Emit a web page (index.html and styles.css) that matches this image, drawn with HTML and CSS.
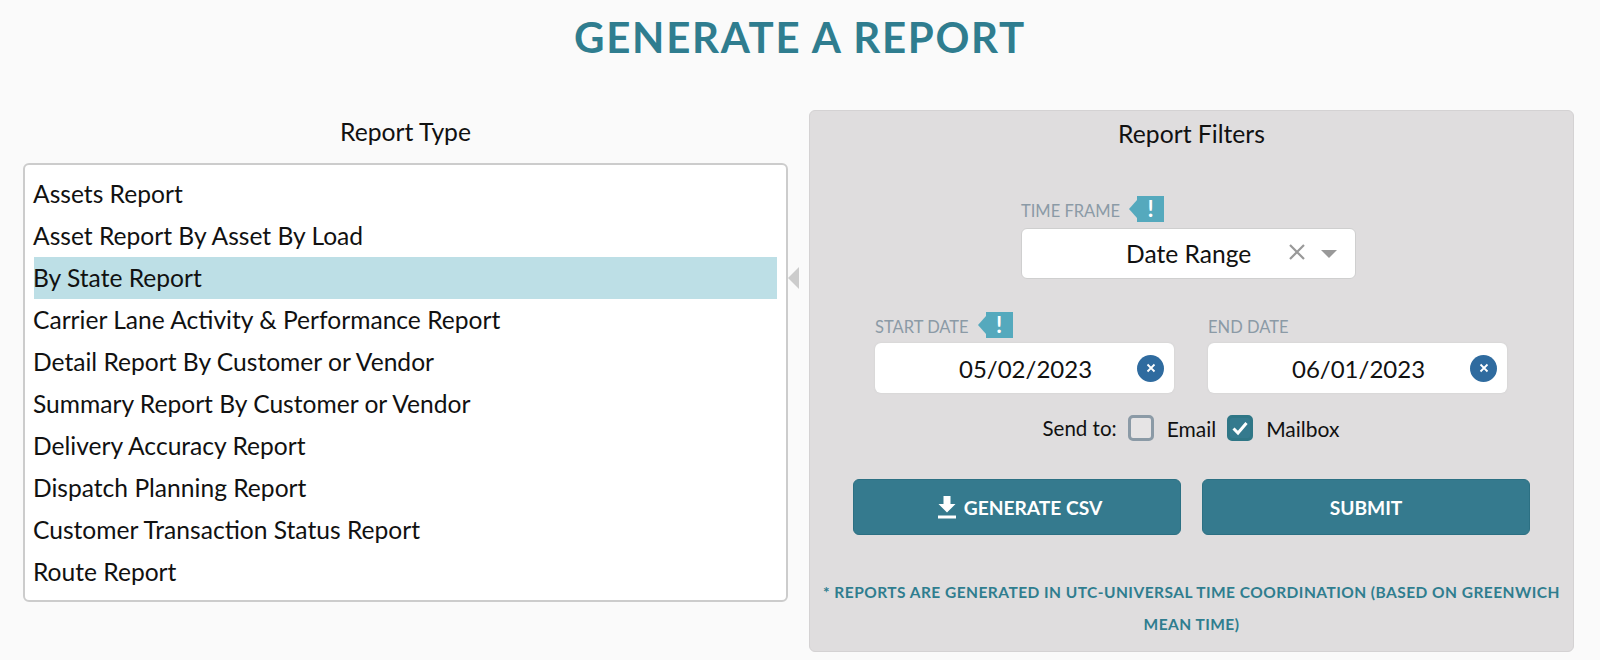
FILE: index.html
```html
<!DOCTYPE html>
<html lang="en">
<head>
    <meta charset="UTF-8">
    <title>Generate a Report</title>
    <link rel="stylesheet" href="styles.css">
</head>
<body>

    <h1 class="page-title">GENERATE A REPORT</h1>

    <div class="report-columns">

        <!-- Report Type -->
        <div class="type-column">
            <h2 class="column-heading">Report Type</h2>
            <div class="type-list">
                <div class="type-row">Assets Report</div>
                <div class="type-row">Asset Report By Asset By Load</div>
                <div class="type-row selected">By State Report</div>
                <div class="type-row">Carrier Lane Activity &amp; Performance Report</div>
                <div class="type-row">Detail Report By Customer or Vendor</div>
                <div class="type-row">Summary Report By Customer or Vendor</div>
                <div class="type-row">Delivery Accuracy Report</div>
                <div class="type-row">Dispatch Planning Report</div>
                <div class="type-row">Customer Transaction Status Report</div>
                <div class="type-row">Route Report</div>
                <span class="list-arrow"></span>
            </div>
        </div>

        <!-- Report Filters -->
        <div class="filter-panel">
            <h2 class="column-heading">Report Filters</h2>

            <div class="time-frame">
                <div class="field-label">
                    TIME FRAME
                    <span class="hint-tag">!</span>
                </div>
                <div class="select-box">
                    <span class="select-value">Date Range</span>
                    <svg class="select-clear" width="16" height="16" viewBox="0 0 16 16">
                        <path d="M1 1L15 15M15 1L1 15" stroke="#999" stroke-width="2.2" fill="none"/>
                    </svg>
                    <span class="select-caret"></span>
                </div>
            </div>

            <div class="date-row">
                <div class="date-field">
                    <div class="field-label">
                        START DATE
                        <span class="hint-tag">!</span>
                    </div>
                    <div class="date-box">
                        <span class="date-value">05/02/2023</span>
                        <span class="date-clear">
                            <svg width="12" height="12" viewBox="0 0 12 12">
                                <path d="M2.5 2.5L9.5 9.5M9.5 2.5L2.5 9.5" stroke="#fff" stroke-width="1.8" fill="none"/>
                            </svg>
                        </span>
                    </div>
                </div>
                <div class="date-field">
                    <div class="field-label">END DATE</div>
                    <div class="date-box">
                        <span class="date-value">06/01/2023</span>
                        <span class="date-clear">
                            <svg width="12" height="12" viewBox="0 0 12 12">
                                <path d="M2.5 2.5L9.5 9.5M9.5 2.5L2.5 9.5" stroke="#fff" stroke-width="1.8" fill="none"/>
                            </svg>
                        </span>
                    </div>
                </div>
            </div>

            <div class="send-row">
                <span class="send-label">Send to:</span>
                <span class="check-box"></span>
                <span class="check-label">Email</span>
                <span class="check-box checked">
                    <svg width="18" height="16" viewBox="0 0 18 16">
                        <path d="M2.5 8.5L7 13L15.5 3" stroke="#fff" stroke-width="3" fill="none"/>
                    </svg>
                </span>
                <span class="check-label">Mailbox</span>
            </div>

            <div class="button-row">
                <button class="action-button csv-button">
                    <svg width="20" height="24" viewBox="0 0 20 24">
                        <path d="M6.5 1H13.5V9H18.5L10 17.5L1.5 9H6.5Z" fill="#fff"/>
                        <rect x="1" y="20.5" width="18" height="3" fill="#fff"/>
                    </svg>
                    GENERATE CSV
                </button>
                <button class="action-button">SUBMIT</button>
            </div>

            <p class="utc-note">* REPORTS ARE GENERATED IN UTC-UNIVERSAL TIME COORDINATION (BASED ON GREENWICH MEAN TIME)</p>
        </div>

    </div>

</body>
</html>
```

FILE: styles.css
```css
body, html {
    margin: 0;
    padding: 0;
    height: 100%;
    background-color: #fafafa;
    font-family: Lato, 'Open Sans', sans-serif;
    overflow: hidden;
}

.page-title {
    margin: 0;
    padding-top: 13px;
    height: 110px;
    box-sizing: border-box;
    text-align: center;
    font-size: 42px;
    line-height: 48px;
    font-weight: 700;
    letter-spacing: 1.7px;
    color: #2f7d8f;
}

.report-columns {
    display: flex;
    gap: 21px;
    padding: 0 26px 0 23px;
}

.column-heading {
    margin: 0;
    text-align: center;
    font-size: 24.7px;
    line-height: 26px;
    font-weight: 400;
    color: #111;
}

/* Report Type */
.type-column {
    width: 765px;
    padding-top: 9px;
}

.type-list {
    position: relative;
    margin-top: 18px;
    height: 439px;
    box-sizing: border-box;
    padding: 8px 9px;
    background-color: #fff;
    border: 2px solid #ccc;
    border-radius: 6px;
}

.type-row {
    height: 42px;
    line-height: 42px;
    font-size: 24.6px;
    text-indent: -1px;
    color: #111;
    white-space: nowrap;
}

.type-row.selected {
    background-color: #bddfe6;
}

.list-arrow {
    position: absolute;
    top: 102px;
    right: -13px;
    border-style: solid;
    border-width: 11px 11px 11px 0;
    border-color: transparent #ccc transparent transparent;
}

/* Report Filters */
.filter-panel {
    width: 765px;
    height: 542px;
    box-sizing: border-box;
    padding: 10px 43px 0;
    background-color: #dfddde;
    border: 1px solid #d4d2d3;
    border-radius: 6px;
}

.time-frame {
    width: 335px;
    margin: 48px 0 0 168px;
}

.field-label {
    display: flex;
    align-items: center;
    gap: 9px;
    height: 27px;
    padding-top: 5px;
    box-sizing: border-box;
    font-size: 16.5px;
    color: #8b9aa6;
    white-space: nowrap;
}

.hint-tag {
    position: relative;
    width: 27px;
    height: 26px;
    margin-top: -5px;
    margin-left: 8px;
    background-color: #55a9bd;
    color: #fff;
    font-size: 22px;
    font-weight: 700;
    line-height: 26px;
    text-align: center;
}

.hint-tag::before {
    content: "";
    position: absolute;
    top: 4px;
    left: -8px;
    border-style: solid;
    border-width: 9px 8px 9px 0;
    border-color: transparent #55a9bd transparent transparent;
}

.select-box {
    display: flex;
    align-items: center;
    height: 51px;
    margin-top: 6px;
    box-sizing: border-box;
    background-color: #fff;
    border: 1px solid #cfcfcf;
    border-radius: 6px;
}

.select-value {
    margin-left: 104px;
    width: 163px;
    font-size: 24.6px;
    color: #111;
}

.select-clear {
    margin-top: -4px;
}

.select-caret {
    margin-left: 16px;
    border-style: solid;
    border-width: 8px 8.5px 0;
    border-color: #999 transparent transparent;
}

.date-row {
    display: flex;
    gap: 34px;
    margin-top: 32px;
    padding-left: 22px;
}

.date-field {
    width: 299px;
}

.date-box {
    display: flex;
    align-items: center;
    justify-content: space-between;
    height: 50px;
    margin-top: 5px;
    padding: 0 10px 0 84px;
    box-sizing: border-box;
    background-color: #fff;
    border-radius: 6px;
    box-shadow: 0 0 2px #ccc;
}

.date-value {
    font-size: 24px;
    color: #111;
}

.date-clear {
    display: flex;
    align-items: center;
    justify-content: center;
    width: 27px;
    height: 27px;
    border-radius: 50%;
    background-color: #2f6b9f;
}

.send-row {
    display: flex;
    align-items: center;
    justify-content: center;
    height: 26px;
    margin-top: 22px;
    margin-left: 10px;
    font-size: 21px;
    color: #111;
}

.send-label {
    margin-right: 11px;
    font-size: 20.5px;
}

.check-box {
    display: flex;
    align-items: center;
    justify-content: center;
    width: 26px;
    height: 26px;
    box-sizing: border-box;
    border: 3px solid #8b9aa6;
    border-radius: 5px;
    background-color: #e6e4e5;
}

.check-box.checked {
    border-color: #2f7686;
    background-color: #357a8e;
}

.check-label {
    margin: 0 11px 0 13px;
}

.button-row {
    display: flex;
    gap: 21px;
    margin-top: 38px;
}

.action-button {
    display: flex;
    align-items: center;
    justify-content: center;
    gap: 7px;
    width: 328px;
    height: 56px;
    background-color: #357a8e;
    border: 1px solid #2c7083;
    border-radius: 6px;
    color: #fff;
    font-family: Lato, 'Open Sans', sans-serif;
    font-size: 19.2px;
    font-weight: 700;
}

.csv-button {
    padding-left: 11px;
}

.utc-note {
    margin: 41px -43px 0;
    padding: 0 10px;
    text-align: center;
    font-size: 15.5px;
    line-height: 32px;
    font-weight: 700;
    letter-spacing: 0.46px;
    color: #2f7d8f;
}
```
